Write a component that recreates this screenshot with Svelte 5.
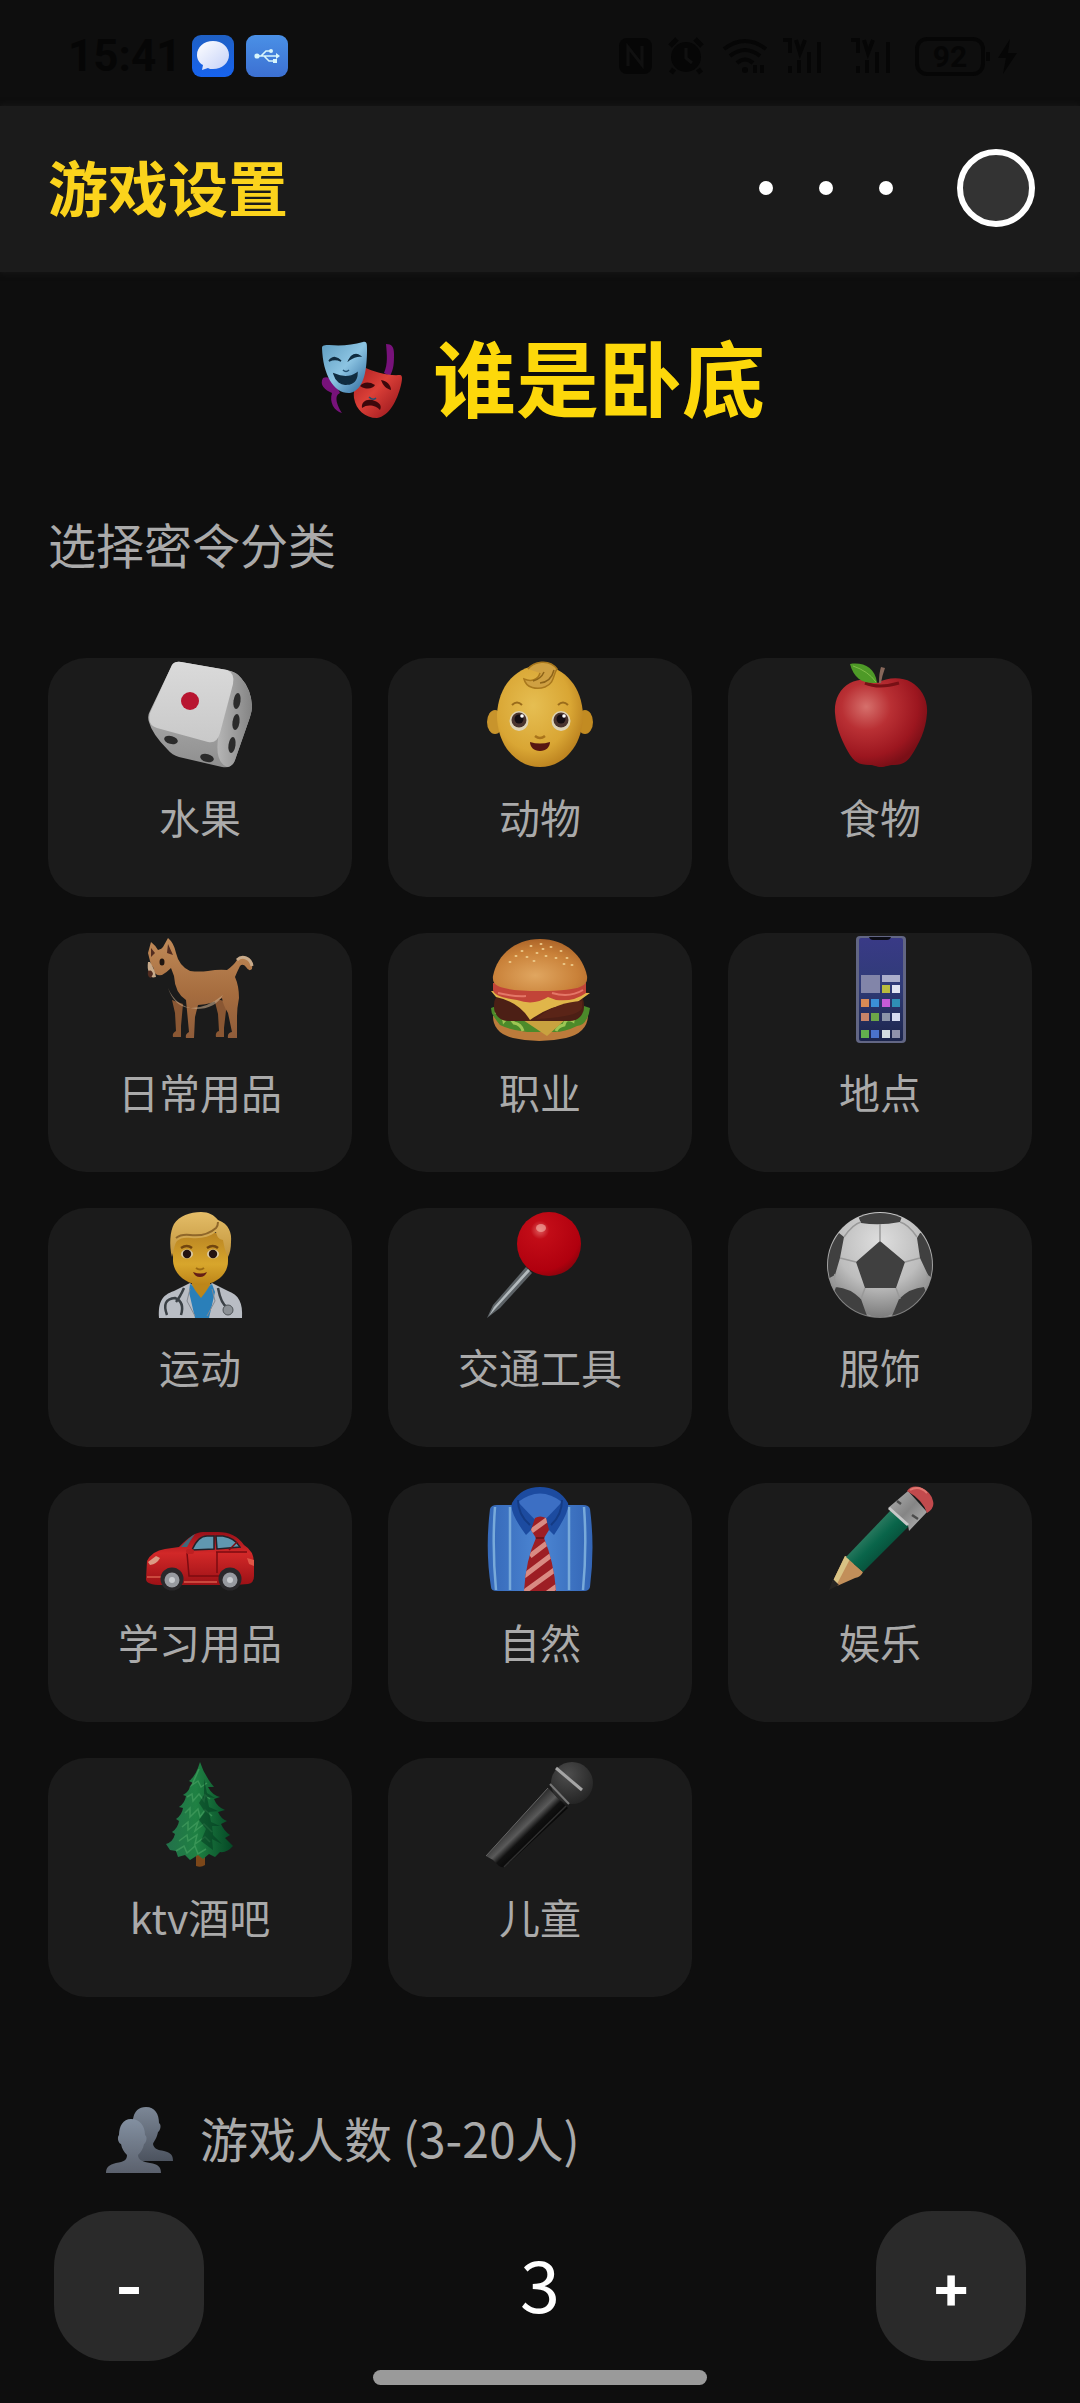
<script>
  const categories = [
    { name: '水果', icon: 'dice' },
    { name: '动物', icon: 'baby' },
    { name: '食物', icon: 'apple' },
    { name: '日常用品', icon: 'dog' },
    { name: '职业', icon: 'burger' },
    { name: '地点', icon: 'phone' },
    { name: '运动', icon: 'doctor' },
    { name: '交通工具', icon: 'pin' },
    { name: '服饰', icon: 'ball' },
    { name: '学习用品', icon: 'car' },
    { name: '自然', icon: 'shirt' },
    { name: '娱乐', icon: 'pencil' },
    { name: 'ktv酒吧', icon: 'tree' },
    { name: '儿童', icon: 'mic' }
  ];

  const apps = [
    [35, 38, '#b9bc3e'], [45, 38, '#e2e5f2'],
    [5, 63, '#d88a55'], [15, 63, '#3b8fd6'], [26, 63, '#c45bd8'], [36, 63, '#2f8fb5'],
    [5, 77, '#c98468'], [15, 77, '#6ca548'], [26, 77, '#8b94a8'], [36, 77, '#d5daf0'],
    [5, 94, '#62b04e'], [15, 94, '#4a72cc'], [26, 94, '#d5dde2'], [36, 94, '#8f92ac']
  ];

  const seeds = [
    [36, 15], [45, 10], [55, 8], [65, 11], [75, 15], [41, 21], [51, 17], [60, 20],
    [70, 22], [81, 22], [30, 20], [86, 29], [48, 25], [24, 26], [57, 13], [78, 28]
  ];

  let players = $state(3);
  let selected = $state('');
</script>

<div class="app">
  <div class="status">
    <div class="group">
      <span class="time">15:41</span>
      <svg class="badge" viewBox="0 0 42 42">
        <defs>
          <linearGradient id="msg" x1="0" y1="0" x2="0" y2="1"><stop offset="0" stop-color="#1f60c4" /><stop offset="1" stop-color="#1763ee" /></linearGradient>
          <linearGradient id="bub" x1="0" y1="0" x2="1" y2="1"><stop offset="0" stop-color="#fff" /><stop offset="1" stop-color="#c3d0f8" /></linearGradient>
        </defs>
        <rect width="42" height="42" rx="9" fill="url(#msg)" />
        <path d="M21 6c9 0 16 6 16 14s-7 14-16 14c-2 0-4 0-5-1l-6 2 1-5C7 28 5 24 5 20 5 12 12 6 21 6z" fill="url(#bub)" />
      </svg>
      <svg class="badge" viewBox="0 0 42 42">
        <defs>
          <linearGradient id="usb" x1="0" y1="0" x2="0" y2="1"><stop offset="0" stop-color="#4a90e6" /><stop offset="1" stop-color="#3c70d2" /></linearGradient>
        </defs>
        <rect width="42" height="42" rx="9" fill="url(#usb)" />
        <g fill="none" stroke="#d8f5fb" stroke-width="1.6">
          <path d="M11 21h20M15 21l5-5h4M18 21l5 5h5" />
        </g>
        <circle cx="11" cy="21" r="2.6" fill="#d8f5fb" /><circle cx="25" cy="16" r="2" fill="#d8f5fb" />
        <path d="M30 18l4 3-4 3zM27 24h4v4h-4z" fill="#d8f5fb" />
      </svg>
    </div>
    <svg class="system" viewBox="0 0 402 42">
      <rect x="1" y="3" width="33" height="36" rx="8" fill="#060606" />
      <path d="M10 31V12l14 18V11" fill="none" stroke="#101010" stroke-width="3" />
      <circle cx="68" cy="22" r="15" fill="#060606" />
      <path d="M52 11l7-7M84 11l-7-7M56 34l-3 4M80 34l3 4" stroke="#060606" stroke-width="5" />
      <path d="M68 13v10l6 5" fill="none" stroke="#101010" stroke-width="3" />
      <g fill="none" stroke="#060606" stroke-width="4">
        <path d="M106 14q21-16 42 0M112 21q15-12 30 0M119 28q8-7 16 0" />
      </g>
      <circle cx="127" cy="35" r="3" fill="#060606" />
      <path d="M137 38v-8M144 38v-8M172 38v-7M181 38v-13M191 38V17M201 38V7M172 18V5h-7M178 5l4 13 5-13M240 38v-7M249 38v-13M259 38V17M270 38V7M240 18V5h-7M246 5l4 13 5-13" fill="none" stroke="#060606" stroke-width="4" />
      <rect x="299" y="4" width="66" height="35" rx="10" fill="none" stroke="#060606" stroke-width="4" />
      <path d="M370 17v9" stroke="#060606" stroke-width="4" />
      <text x="332" y="32" text-anchor="middle" class="level">92</text>
      <path d="M392 4l-12 19h8l-3 16 14-21h-9z" fill="#060606" />
    </svg>
  </div>

  <header>
    <span class="page-name">游戏设置</span>
    <div class="actions">
      <button class="more" aria-label="更多"><i></i><i></i><i></i></button>
      <button class="ring" aria-label="关闭"></button>
    </div>
  </header>

  <main>
    <h1>
      <svg class="masks" viewBox="0 0 92 84">
        <defs>
          <linearGradient id="mb" x1="0" y1="0" x2="1" y2="1"><stop offset="0" stop-color="#5e9cc0" /><stop offset=".5" stop-color="#8cc4e2" /><stop offset="1" stop-color="#29669b" /></linearGradient>
          <linearGradient id="mr" x1="0" y1="0" x2="1" y2="1"><stop offset="0" stop-color="#a81d20" /><stop offset=".45" stop-color="#dc4038" /><stop offset="1" stop-color="#8e1018" /></linearGradient>
        </defs>
        <path d="M71 5c6 0 8 3 8 10 0 9 0 14-4 22l-6-3c4-9 3-18 2-29zM8 39c4-2 9 0 12 5l5 10c-7 3-2 14 2 20-8-2-13-11-10-20-7-3-13-8-9-15z" fill="#77127a" />
        <path d="M49 28c10 5 24 9 36 8 3 0 2 6 1 10-4 16-12 31-24 33-12 0-21-8-23-20-1-8 2-22 10-31z" fill="url(#mr)" />
        <path d="M45 47c3-4 9-5 15-1-2 4-9 5-15 1zM66 41c2 6 6 9 10 10 0-5-4-9-10-10zM47 69c-1-7 6-10 13-7 5 2 7 5 5 9-3-4-12-7-18-2z" fill="#3d080b" />
        <path d="M7 9c0-3 3-3 7-3 13 1 23 0 34-3 4-1 4 2 4 7 0 18-2 41-17 44C19 55 8 36 7 9z" fill="url(#mb)" />
        <path d="M14 22c4-5 8-4 12 0-4-2-8-2-12 0zM34 21c2-5 7-7 11-4-5 0-7 1-11 4zM19 35c9 4 16 4 23-1 0 7-4 11-10 11-6 1-11-3-13-10z" stroke="#102c40" stroke-width="1.5" fill="#102c40" />
        <path d="M28 31q3 3 6 0M54 58q4 4 7 1" fill="none" stroke="#245070" stroke-width="1.5" />
      </svg>
      谁是卧底
    </h1>

    <h2>选择密令分类</h2>

    <div class="grid">
      {#each categories as c}
        <button class="card" aria-pressed={selected === c.name} onclick={() => (selected = c.name)}>
          <svg class="icon" viewBox="0 0 108 108" aria-hidden="true">
            {#if c.icon === 'dice'}
              <defs>
                <linearGradient id="d1" x1="0" y1="0" x2="0" y2="1"><stop offset="0" stop-color="#dadada" /><stop offset="1" stop-color="#c9c9c9" /></linearGradient>
                <linearGradient id="d2" x1="0" y1="0" x2="1" y2="0"><stop offset="0" stop-color="#b5b5b5" /><stop offset="1" stop-color="#848484" /></linearGradient>
                <linearGradient id="d3" x1="0" y1="0" x2="0" y2="1"><stop offset="0" stop-color="#bdbdbd" /><stop offset="1" stop-color="#8f8f8f" /></linearGradient>
              </defs>
              <path d="M26 4q3-4 9-3l46 8q9 2 14 8 10 11 11 28 0 5-2 11L89 99q-3 9-13 7L33 96q-7-2-11-7Q6 73 3 61q-2-6 1-11z" fill="url(#d3)" />
              <path d="M83 10q8 1 12 7 10 11 11 28 0 5-2 11L89 99q-2 6-8 7-12-5-9-28l8-50z" fill="url(#d2)" />
              <path d="M26 4q3-4 9-3l46 8q8 3 6 14L74 72q-3 11-12 9L11 67q-10-3-7-15z" fill="url(#d1)" />
              <ellipse cx="44" cy="40" rx="9" ry="9" fill="#b81530" />
              <g fill="#2b2b2b">
                <ellipse cx="91" cy="40" rx="3.5" ry="8" transform="rotate(8 91 40)" /><ellipse cx="90" cy="61" rx="3.5" ry="8" transform="rotate(8 90 61)" /><ellipse cx="86" cy="84" rx="3.5" ry="8" transform="rotate(8 86 84)" />
                <ellipse cx="25" cy="79" rx="7" ry="4" transform="rotate(15 25 79)" /><ellipse cx="61" cy="97" rx="7" ry="4" transform="rotate(15 61 97)" />
              </g>
            {:else if c.icon === 'baby'}
              <defs>
                <radialGradient id="b1" cx=".42" cy=".4" r=".62"><stop offset="0" stop-color="#e6be52" /><stop offset=".7" stop-color="#d9a634" /><stop offset="1" stop-color="#bd8420" /></radialGradient>
              </defs>
              <ellipse cx="9" cy="61" rx="8" ry="12" fill="#c8942c" /><ellipse cx="99" cy="61" rx="8" ry="12" fill="#c28b22" />
              <path d="M54 4C28 6 12 27 11 54c0 30 19 52 43 52s43-22 43-52C96 27 80 6 54 4z" fill="url(#b1)" />
              <path d="M42 8c5-7 21-11 29 0-4 5-2 14-12 18-8 3-19 1-21-8 7 3 14 1 16-6" fill="#cfa042" stroke="#a9781d" stroke-width="1.5" />
              <path d="M54 22q11-1 14-13M47 20q8-2 11-9" fill="none" stroke="#8e6419" stroke-width="1.5" />
              <path d="M26 44q5-5 10 0M72 44q5-5 10 0" fill="none" stroke="#9a6c1b" stroke-width="2" />
              <ellipse cx="33" cy="60" rx="9.5" ry="10" fill="#ddd2b5" /><ellipse cx="75" cy="60" rx="9.5" ry="10" fill="#ddd2b5" />
              <circle cx="33" cy="59" r="7.5" fill="#4a342f" /><circle cx="75" cy="59" r="7.5" fill="#4a342f" />
              <circle cx="33" cy="58" r="4.5" fill="#140d12" /><circle cx="75" cy="58" r="4.5" fill="#140d12" />
              <circle cx="36" cy="55" r="1.8" fill="#fff" /><circle cx="78" cy="55" r="1.8" fill="#fff" />
              <path d="M49 75q5 4 10 0" fill="none" stroke="#a9741b" stroke-width="2.5" />
              <path d="M44 81q10 3 20 0c0 5-4 9-10 9s-10-4-10-9z" fill="#571512" />
            {:else if c.icon === 'apple'}
              <defs>
                <radialGradient id="a1" cx=".34" cy=".32" r=".7"><stop offset="0" stop-color="#d6706c" /><stop offset=".38" stop-color="#b93034" /><stop offset=".8" stop-color="#9c161f" /><stop offset="1" stop-color="#7b0f17" /></radialGradient>
              </defs>
              <path d="M52 22c-8-5-20-4-28 0C13 28 8 40 9 52c1 16 8 30 15 42 5 8 11 10 19 10 6 0 7 2 12 2s7-2 13-2c8 0 13-3 17-9 8-12 15-26 16-43 1-14-6-25-16-31-9-5-24-5-33 1z" fill="url(#a1)" />
              <path d="M39 22q14 6 34 0" fill="none" stroke="#771015" stroke-width="3" />
              <path d="M53 22q0-10 2-16l4 1q-3 8-4 15z" fill="#87675a" />
              <path d="M24 3c13-2 25 3 27 19-14 1-23-4-27-19z" fill="#4e9a27" /><path d="M27 5q15 5 23 16" stroke="#80bd4a" fill="none" />
            {:else if c.icon === 'dog'}
              <defs>
                <linearGradient id="g1" x1="0" y1="0" x2="0" y2="1"><stop offset="0" stop-color="#c08a58" /><stop offset=".55" stop-color="#a66d3f" /><stop offset="1" stop-color="#8f5c3a" /></linearGradient>
              </defs>
              <path d="M26 64l11 4-2 22v11h-8q-1-4 3-6l-1-18zM68 62l13 4-3 26v9h-8q-1-5 3-6l-1-17z" fill="#8a5733" />
              <path d="M2 17l3-11q4 3 7 8 4-1 5-3l5-9q6 5 8 15 3 13 14 18 9 1 18 0 11-2 19-1 7-5 10-10 5-6 12-2 4 4 3 11-3 3-6-2-3-4-6-1-3 6-5 11 4 9 4 21-2 10-2 18v22h-9q-1-5 4-6l-4-19q-5-8-6-15-9 6-24 7l-3 12-1 21h-8q-1-4 3-6l-3-32q-11-7-12-24l-3-8q-5 5-9 7-7 1-8-4 0-4-3-6z" fill="url(#g1)" />
              <path d="M22 52q6 18 21 20 17 1 34-13-8 14-27 14-20-2-28-21z" fill="#c8aa8a" opacity=".6" />
              <path d="M4 26q5 8 6 15-7 2-7-5-2-3-1-10z" fill="#c8aa8a" />
              <path d="M2 35q4-2 5 3l-2 4q-4-1-3-7zM5 12l4 5-4 4zM22 8l5 11-6-2z" fill="#522c20" /><ellipse cx="16" cy="26" rx="2.5" ry="3.5" fill="#201510" />
              <path d="M91 24q4-4 9-2 5 2 6 8" fill="none" stroke="#c8aa8a" stroke-width="3" />
            {:else if c.icon === 'burger'}
              <defs>
                <radialGradient id="h1" cx=".45" cy=".7" r=".75"><stop offset="0" stop-color="#e0a660" /><stop offset=".6" stop-color="#c98139" /><stop offset="1" stop-color="#a75f25" /></radialGradient>
              </defs>
              <path d="M7 80q0 17 20 22 26 6 53 0 21-5 22-22z" fill="#bc7b3b" />
              <path d="M5 72l8-3h82l9 3q-1 8-4 12-2 5-9 6-12 6-23 6H41Q24 94 14 89q-4-5-6-8-3-4-3-9z" fill="#4b8a2a" />
              <path d="M9 76q8 2 9 9 5-6 10 2 7 1 9 8M96 75q-8 2-9 10-7-4-9 4-6 1-8 6" fill="none" stroke="#9ec654" stroke-width="3" />
              <path d="M37 84h42l-18 16z" fill="#c9a23f" />
              <rect x="8" y="55" width="90" height="30" rx="14" fill="#4c1f15" />
              <path d="M5 55l99 2-14 10q-26 2-46 17Q33 66 10 61z" fill="#e0b64a" />
              <path d="M50 83q20-17 46-18v7q-3 9-46 11z" fill="#5a2417" />
              <path d="M7 47h93v10q-12 9-30 7l-8-3q-14 9-31 3Q8 61 7 54z" fill="#c24438" />
              <path d="M12 57q18 4 28 3M66 57q18 5 31-3" stroke="#e47767" stroke-width="2" fill="none" />
              <path d="M54 3C28 3 11 20 7 40q-1 7 5 10 10 5 42 5t42-5q6-3 5-10C97 20 80 3 54 3z" fill="url(#h1)" />
              {#each seeds as [x, y]}<ellipse cx={x} cy={y} rx="1.5" ry="1" fill="#eccb8b" />{/each}
            {:else if c.icon === 'phone'}
              <defs>
                <linearGradient id="p1" x1="0" y1="0" x2="0" y2="1"><stop offset="0" stop-color="#393a86" /><stop offset=".45" stop-color="#303b78" /><stop offset="1" stop-color="#1c254c" /></linearGradient>
              </defs>
              <rect x="30" y="0" width="50" height="107" rx="4" fill="#626684" /><rect x="33" y="2" width="44" height="103" rx="2" fill="url(#p1)" />
              <path d="M43 1h22q-1 3-4 3H47q-3 0-4-3z" fill="#0c0d16" />
              <rect x="35" y="39" width="19" height="18" fill="#8285a9" /><rect x="56" y="39" width="18" height="7" fill="#abaecb" />
              <rect x="56" y="49" width="8" height="8" fill={apps[0][2]} /><rect x="66" y="49" width="8" height="8" fill={apps[1][2]} />
              {#each apps.slice(2) as [x, y, fill]}<rect x={x + 30} {y} width="8" height="8" {fill} />{/each}
            {:else if c.icon === 'doctor'}
              <defs>
                <linearGradient id="o1" x1="0" y1="0" x2="0" y2="1"><stop offset="0" stop-color="#b98422" /><stop offset=".6" stop-color="#d8a62c" /><stop offset="1" stop-color="#bc8418" /></linearGradient>
                <linearGradient id="o2" x1="0" y1="0" x2="0" y2="1"><stop offset="0" stop-color="#e4bd68" /><stop offset="1" stop-color="#c2953c" /></linearGradient>
              </defs>
              <path d="M13 107c-1-16 3-23 15-27l16-8 11 10 11-10 16 8c11 4 15 12 14 27z" fill="#b9bdc4" />
              <path d="M44 73l11 8 11-8 3 8-6 26H49l-6-26z" fill="#2a7fb9" />
              <path d="M46 62h18v12q-4 7-9 13-6-7-9-13z" fill="#bd8619" />
              <path d="M27 22v28c1 13 12 23 28 24 16-1 27-11 27-24V22z" fill="url(#o1)" />
              <path d="M26 46C23 34 24 20 28 13 33 5 44 1 55 1c8 0 13 3 17 8 11 4 14 13 13 22 0 6-1 11-3 15-3-6-4-11-5-17-5-1-6-4-7-8-7 5-15 7-25 6-6-1-11 0-14 3-3 4-3 10-5 16z" fill="url(#o2)" />
              <path d="M30 27q5-4 14-3 16 2 26-7 2-2 2-6" fill="none" stroke="#8f672a" stroke-width="2" />
              <path d="M35 37q6-4 11 0M61 37q6-4 11 0" fill="none" stroke="#71450f" stroke-width="2.5" />
              <ellipse cx="41" cy="43" rx="6" ry="4.5" fill="#d9c9a5" /><ellipse cx="67" cy="43" rx="6" ry="4.5" fill="#d9c9a5" />
              <circle cx="41" cy="43" r="4.2" fill="#241211" /><circle cx="67" cy="43" r="4.2" fill="#241211" />
              <path d="M50 57q4 3 8 0" fill="none" stroke="#9c6a12" stroke-width="2" /><path d="M47 61q8 3 14 0-2 5-7 5t-7-5z" fill="#641d16" />
              <path d="M38 77q-4 9-8 14M72 77q3 16 9 19M21 104q-6-16 8-17 10 4 6 17" fill="none" stroke="#3a4045" stroke-width="2.5" />
              <circle cx="82" cy="99" r="5" fill="#8b9095" stroke="#4f5458" /><path d="M44 78l-3 12 8 15M66 78l3 12-8 15" fill="none" stroke="#858991" />
            {:else if c.icon === 'pin'}
              <defs>
                <radialGradient id="n1" cx=".36" cy=".28" r=".8"><stop offset="0" stop-color="#e06060" /><stop offset=".18" stop-color="#c20c17" /><stop offset=".8" stop-color="#b0000e" /><stop offset="1" stop-color="#80040c" /></radialGradient>
              </defs>
              <path d="M40 56l6 6L14 97 1 107l6-13z" fill="#5d6367" /><path d="M42 58l2 2L10 97l-7 8 5-9z" fill="#b3babd" />
              <circle cx="63" cy="33" r="32" fill="url(#n1)" /><ellipse cx="55" cy="17" rx="5" ry="4" fill="#f0a29a" opacity=".7" />
            {:else if c.icon === 'ball'}
              <defs>
                <radialGradient id="f1" cx=".5" cy=".28" r=".75"><stop offset="0" stop-color="#dedede" /><stop offset=".55" stop-color="#bdbdbd" /><stop offset="1" stop-color="#747474" /></radialGradient>
                <clipPath id="fc"><circle cx="54" cy="54" r="52" /></clipPath>
              </defs>
              <circle cx="54" cy="54" r="53" fill="url(#f1)" />
              <g clip-path="url(#fc)">
                <path d="M54 30l25 21-9 26H39l-9-26zM30 0h48l-4 11q-20 4-39 1zM-2 70l0-48h15l5 4-4 21-5 17zM110 70V22H94l-3 5 3 20 8 17zM10 76q14 1 25 12l6 17-12 8L4 92zM98 76q-14 1-25 12l-7 17 12 8 26-21z" fill="#404040" />
                <path d="M54 30V13M79 51l15-4M70 77l4 11M39 77l-4 11M30 51l-16-4M35 11q-8 2-17 15M74 11q8 2 17 15M9 63q-2 7 2 13M101 63q2 7-3 13M41 104q13 6 25 0" fill="none" stroke="#999" stroke-width="1.5" />
              </g>
            {:else if c.icon === 'car'}
              <defs>
                <linearGradient id="c1" x1="0" y1="0" x2="0" y2="1"><stop offset="0" stop-color="#981019" /><stop offset=".4" stop-color="#d22828" /><stop offset="1" stop-color="#9c1116" /></linearGradient>
              </defs>
              <path d="M1 75q5-10 18-12l14-2q14-15 24-15h15q17 0 26 13 10 6 10 18v13q0 7-6 8l-13 1H16Q0 99 0 93z" fill="url(#c1)" />
              <path d="M46 64q6-14 15-14h7v13zM70 50h7q12 2 17 11l-23 2z" fill="#6098b0" stroke="#242229" stroke-width="1.5" />
              <path d="M35 61q8-10 14-13-4 5-8 13z" fill="#406879" />
              <path d="M41 67l2 23h31M71 66v21M70 66l31 0M83 64l8-8" fill="none" stroke="#7c0b11" stroke-width="1.5" />
              <path d="M2 76l8-6 4 2q-3 6-10 7z" fill="#db9b84" /><path d="M101 72l7 2v6l-5-2z" fill="#e05546" />
              <rect x="40" y="63" width="8" height="5" rx="2" fill="#bd1f21" />
              <path d="M1 91h16M38 96h33" stroke="#d65b4b" stroke-width="1.5" />
              <circle cx="26" cy="93" r="11.5" fill="#29282b" /><circle cx="26" cy="94" r="7.5" fill="#979aa0" /><circle cx="26" cy="94" r="3" fill="#c9ccd0" />
              <circle cx="84" cy="93" r="11.5" fill="#29282b" /><circle cx="84" cy="94" r="7.5" fill="#979aa0" /><circle cx="84" cy="94" r="3" fill="#c9ccd0" />
            {:else if c.icon === 'shirt'}
              <defs>
                <linearGradient id="s1" x1="0" y1="0" x2="1" y2="0"><stop offset="0" stop-color="#3568b8" /><stop offset=".5" stop-color="#4c86d3" /><stop offset="1" stop-color="#3365b5" /></linearGradient>
              </defs>
              <path d="M4 23q1-4 7-4h86q6 0 7 4 5 38 0 78-1 4-6 4H11q-6 0-6-4-6-37-1-78z" fill="url(#s1)" />
              <path d="M9 21q-3 40 1 83M24 21v83M83 21v83M98 21q3 40-1 83" fill="none" stroke="#78aada" stroke-width="2.5" />
              <path d="M26 17Q35 1 54 1t28 16q2 8-14 32L54 35 40 49Q23 26 26 17z" fill="#1c4ba0" />
              <path d="M32 16Q54-1 76 16L54 39z" fill="#3c6fc4" />
              <path d="M32 14q0 15 12 25M76 14q0 15-11 25" fill="none" stroke="#143b84" stroke-width="2" />
              <clipPath id="tie"><path d="M49 32q5-3 11 0l3 12-5 8q10 24 12 53H38q2-32 12-53l-5-8z" /></clipPath>
              <g clip-path="url(#tie)">
                <path d="M36 28h36v78H36z" fill="#9d1e24" />
                <path d="M44 46l18-13M44 70l26-20M38 90l34-26M38 106l36-26M60 108l14-10" stroke="#d98b83" stroke-width="5" />
                <path d="M45 52h18" stroke="#731318" stroke-width="2" />
              </g>
            {:else if c.icon === 'pencil'}
              <defs>
                <linearGradient id="e1" x1="0" y1="0" x2="1" y2="1"><stop offset=".3" stop-color="#348066" /><stop offset=".5" stop-color="#09654a" /><stop offset=".8" stop-color="#053f2e" /></linearGradient>
                <linearGradient id="e2" x1="0" y1="0" x2="1" y2="1"><stop offset="0" stop-color="#b2b2b2" /><stop offset=".5" stop-color="#858585" /><stop offset="1" stop-color="#bbb" /></linearGradient>
              </defs>
              <path d="M19 70q8 1 9 8l9 8q-2 5-8 6l-18 8-5-3z" fill="#c28f5a" /><path d="M19 70l5 3-13 25-5-1z" fill="#d8c284" />
              <path d="M3 104l4-11 6 6z" fill="#262422" />
              <path d="M65 24l18 16-46 46-8-7-9-8z" fill="url(#e1)" />
              <path d="M62 22L82 5l19 21-18 19-1-6L65 24z" fill="url(#e2)" /><path d="M71 15l4 3M86 29l6 4" stroke="#4b4b4b" stroke-width="2.5" /><path d="M63 22l19 17" stroke="#c8c8c8" stroke-width="3" />
              <path d="M81 5q5-7 15-3 9 4 11 13 2 7-6 12-4-13-20-22z" fill="#c24a4d" /><path d="M84 4q9-5 17 3" fill="none" stroke="#df7770" stroke-width="2" />
            {:else if c.icon === 'tree'}
              <defs>
                <linearGradient id="t1" x1="0" y1="0" x2="1" y2="0"><stop offset="0" stop-color="#22704a" /><stop offset=".45" stop-color="#1f8143" /><stop offset="1" stop-color="#044725" /></linearGradient>
              </defs>
              <path d="M50 92h9v12q-4 3-9 1z" fill="#7c4719" />
              <path d="M54 1q4 13 14 25l-6 0q4 8 12 10l-6 2q3 8 11 11l-7 2q3 7 9 9l-6 3q3 7 9 11l-5 3 8 8q-6 7-13 6l-5 5-6-3-6 5-5-4-8 5-5-5-7 2-2-6-6-1-4-6q7-2 9-10l-3-2q6-4 7-11l-3-2q6-4 7-11l-4-1q6-4 7-11l-3-1q6-3 7-9l3-3-4-2Q50 15 54 1z" fill="url(#t1)" />
              <path d="M53 8l-7 16 6-4 3 6 6-4M41 36l5-3 1 7 6-7 5 7 1-6 5 4M39 52l5-5 0 9 8-8 2 8 5-7 7 6M36 66l6-5 0 8 10-8-3 9 9-7 8 8M33 80l8-6 1 6 9-6-2 9 10-7 5 5M30 90l8-5 3 7 8-7 3 8 8-5" fill="none" stroke="#449e60" stroke-width="1.5" opacity=".7" />
              <path d="M58 18l3 14 8 5-8-1 2 10 9 4-9 1 2 10 9 4-8 0 1 9 9 9-10-5 1 11-12-9 5-12-7-9 6-8-6-9 5-8z" fill="#043c20" opacity=".55" />
            {:else}
              <defs>
                <linearGradient id="m1" x1="0" y1="0" x2="1" y2="1"><stop offset=".3" stop-color="#090909" /><stop offset=".48" stop-color="#5a5a5a" /><stop offset=".54" stop-color="#111" /><stop offset=".7" stop-color="#000" /></linearGradient>
                <radialGradient id="m2" cx=".4" cy=".3" r=".8"><stop offset="0" stop-color="#4d4d4d" /><stop offset="1" stop-color="#202020" /></radialGradient>
              </defs>
              <path d="M62 27l20 20-63 59q-3 1-6-1l-6-6L0 95z" fill="url(#m1)" /><path d="M62 27L0 95" stroke="#666" />
              <path d="M18 106l62-61" stroke="#303030" stroke-width="1.5" />
              <circle cx="86" cy="22" r="21" fill="url(#m2)" />
              <path d="M64 23l19 20" stroke="#777" stroke-width="2" /><path d="M70 7l26 22" stroke="#a5a5a5" stroke-width="3" />
            {/if}
          </svg>
          <span>{c.name}</span>
        </button>
      {/each}
    </div>

    <div class="count-title" id="count-title">
      <svg class="people" viewBox="0 0 67 66" aria-hidden="true">
        <defs>
          <linearGradient id="u1" x1="0" y1="0" x2="0" y2="1"><stop offset="0" stop-color="#7c8796" /><stop offset="1" stop-color="#4c535f" /></linearGradient>
          <linearGradient id="u2" x1="0" y1="0" x2="0" y2="1"><stop offset="0" stop-color="#8390a1" /><stop offset="1" stop-color="#5b616d" /></linearGradient>
        </defs>
        <path d="M40 0c9 0 13 7 13 16 3 2 1 8-1 9-1 6-4 9-5 12 1 5 5 6 11 7 7 2 9 4 9 10H32L27 12Q29 0 40 0z" fill="url(#u1)" />
        <path d="M25 12c9 0 14 7 14 16 3 2 1 8-1 9-1 5-3 8-6 11 0 5 5 7 12 8 8 1 11 4 11 10H0c0-6 3-8 10-10 8-1 11-3 11-8-3-3-5-6-6-11-3-1-4-7-2-9 0-9 4-16 12-16z" fill="url(#u2)" />
      </svg>
      <span>游戏人数 (3-20人)</span>
    </div>

    <div class="stepper" role="group" aria-labelledby="count-title">
      <button aria-label="减少人数" onclick={() => (players = Math.max(3, players - 1))}>-</button>
      <output>{players}</output>
      <button aria-label="增加人数" onclick={() => (players = Math.min(20, players + 1))}>+</button>
    </div>
  </main>

  <div class="home"></div>
</div>

<style>
  :global(body) {
    background: #0e0e0e;
  }

  .app {
    font-family: 'Noto Sans CJK SC', 'Noto Sans', sans-serif;
    color: #aaa;
    background: #0e0e0e;
  }

  button {
    font: inherit;
    color: inherit;
    border: 0;
    padding: 0;
    cursor: pointer;
  }

  svg {
    display: block;
    flex: none;
  }

  .status {
    height: 106px;
    padding: 6px 60px 0 68px;
    box-sizing: border-box;
    display: flex;
    align-items: center;
    justify-content: space-between;
  }

  .group {
    display: flex;
    align-items: center;
    gap: 12px;
  }

  .time {
    width: 112px;
    font: 700 44px/48px Roboto, sans-serif;
    color: #060606;
    white-space: nowrap;
  }

  .badge {
    width: 42px;
    height: 42px;
  }

  .system {
    width: 402px;
    height: 42px;
  }

  .level {
    font: 700 30px Roboto, sans-serif;
    fill: #060606;
  }

  header {
    height: 166px;
    padding: 0 45px 2px 48px;
    box-sizing: border-box;
    display: flex;
    align-items: center;
    justify-content: space-between;
    background: #1b1b1b;
    box-shadow: 0 0 6px #1b1b1b;
  }

  .page-name {
    padding-bottom: 4px;
    font-size: 60px;
    font-weight: 700;
    line-height: 72px;
    color: #fbd31c;
  }

  .actions {
    display: flex;
    align-items: center;
    gap: 64px;
  }

  .more {
    display: flex;
    gap: 46px;
    padding: 24px 0;
    background: none;
  }

  .more i {
    width: 14px;
    height: 14px;
    border-radius: 50%;
    background: #fff;
  }

  .ring {
    width: 78px;
    height: 78px;
    box-sizing: border-box;
    border: 6px solid #fff;
    border-radius: 50%;
    background: #333;
  }

  main {
    padding: 55px 48px 0;
  }

  h1 {
    margin: 0;
    display: flex;
    align-items: flex-end;
    justify-content: center;
    gap: 26px;
    font-size: 83px;
    font-weight: 700;
    line-height: 96px;
    color: #fdd80a;
  }

  .masks {
    width: 92px;
    height: 84px;
  }

  h2 {
    margin: 84px 0 79px;
    font-size: 48px;
    font-weight: 400;
    line-height: 72px;
  }

  .grid {
    display: grid;
    grid-template-columns: repeat(3, 1fr);
    gap: 36px;
  }

  .card {
    display: flex;
    flex-direction: column;
    align-items: center;
    gap: 17px;
    padding: 3px 0 51px;
    border-radius: 38px;
    background: #1b1b1b;
    font-size: 41px;
    line-height: 60px;
  }

  .icon {
    width: 108px;
    height: 108px;
  }

  .count-title {
    margin-top: 104px;
    padding-left: 58px;
    display: flex;
    align-items: flex-end;
    gap: 27px;
    font-size: 48px;
    line-height: 72px;
  }

  .people {
    width: 67px;
    height: 66px;
  }

  .stepper {
    margin-top: 38px;
    padding: 0 6px;
    display: flex;
    align-items: center;
    justify-content: space-between;
    color: #fff;
  }

  .stepper button {
    width: 150px;
    height: 150px;
    border-radius: 56px;
    background: #2a2a2a;
    font-family: Inter, sans-serif;
    font-size: 60px;
    font-weight: 700;
    line-height: 96px;
  }

  output {
    padding-bottom: 8px;
    font-size: 72px;
    line-height: 96px;
  }

  .home {
    width: 31%;
    height: 15px;
    margin: 9px auto 0;
    border-radius: 8px;
    background: #9a9a9a;
  }
</style>
